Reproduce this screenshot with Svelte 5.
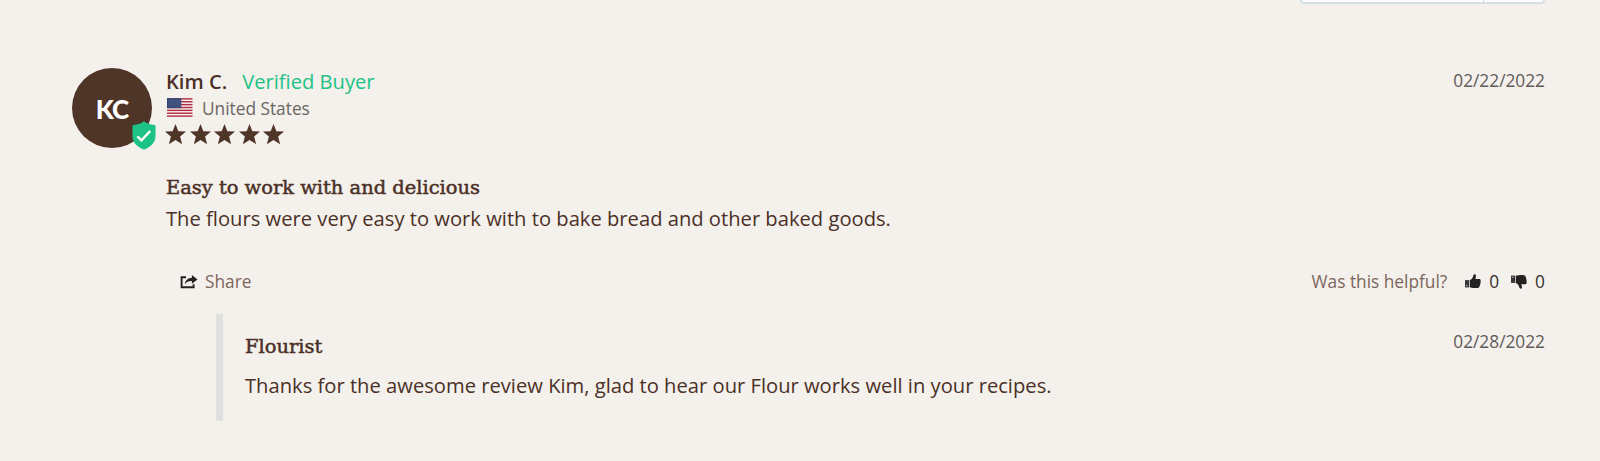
<script lang="ts">
  interface Vote {
    kind: 'up' | 'down';
    count: number;
  }

  const review = {
    initials: 'KC',
    author: 'Kim C.',
    country: 'United States',
    rating: 5,
    date: '02/22/2022',
    title: 'Easy to work with and delicious',
    body: 'The flours were very easy to work with to bake bread and other baked goods.',
  };

  const reply = {
    author: 'Flourist',
    date: '02/28/2022',
    body: 'Thanks for the awesome review Kim, glad to hear our Flour works well in your recipes.',
  };

  let votes: Vote[] = $state([
    { kind: 'up', count: 0 },
    { kind: 'down', count: 0 },
  ]);

  const stars = Array.from({ length: review.rating }, (_, i) => i);
  const stripes = [0, 2, 4, 6, 8, 10, 12];
</script>

<main class="reviews">
  <div class="toolbar">
    <div class="sort">
      <span class="sort-value"></span>
      <span class="sort-toggle"></span>
    </div>
  </div>

  <article class="review">
    <div class="avatar">
      <span class="initials">{review.initials}</span>
      <svg class="badge" viewBox="0 0 24 29" aria-hidden="true">
        <path d="M12 .3c3.500 2.600 7.200 3.700 11.500 4v11c0 6.300-4.600 10.600-11.500 13.500C5.100 25.900.5 21.600.5 15.300v-11C4.800 4 8.500 2.900 12 .3z" fill="#1cc286" />
        <path d="M5.300 15.300l4.200 4 8.700-9.300" fill="none" stroke="#fff" stroke-width="2.500" />
      </svg>
    </div>

    <div class="content">
      <header class="head">
        <div>
          <div class="byline">
            <span class="name">{review.author}</span>
            <span class="verified">Verified Buyer</span>
          </div>
          <div class="location">
            <svg class="flag" viewBox="0 0 26 19" aria-hidden="true">
              <rect width="26" height="19" fill="#fbf3f2" />
              {#each stripes as s}
                <rect y={s * 1.4615} width="26" height="1.4615" fill="#b02c42" />
              {/each}
              <rect width="14.500" height="10.230" fill="#334774" />
              <path d="M1.500 2h12M2.500 4h11M1.500 6h12M2.500 8h11" stroke="#8794b3" stroke-width=".8" stroke-dasharray="1 1.500" />
            </svg>
            <span>{review.country}</span>
          </div>
          <div class="stars" role="img" aria-label="{review.rating} out of 5 stars">
            {#each stars as star (star)}
              <svg viewBox="0 0 20 20" preserveAspectRatio="none" aria-hidden="true">
                <path d="M10 0l2.700 7 7.300.3-5.600 4.900 1.900 7.500L10 15.600l-6.300 4.100 1.900-7.500L0 7.300 7.300 7z" />
              </svg>
            {/each}
          </div>
        </div>
        <time class="date">{review.date}</time>
      </header>

      <h3 class="title">{review.title}</h3>
      <p class="text review-text">{review.body}</p>

      <div class="actions">
        <button type="button" class="share">
          <svg class="share-icon" viewBox="0 0 17 14" aria-hidden="true">
            <path d="M5.500 2.300H1.100v9.900h12V9.300" fill="none" stroke="#222" stroke-width="1.900" />
            <path d="M11.400 0L17 4.400l-5.600 4.300V6.100C8.200 6 6.200 6.700 4.300 9.200 4.700 5.300 7.300 3 11.400 2.700z" fill="#222" />
          </svg>
          <span>Share</span>
        </button>
        <div class="helpful">
          <span class="question">Was this helpful?</span>
          {#each votes as vote (vote.kind)}
            <button type="button" class="vote" aria-label="Vote {vote.kind}" onclick={() => vote.count++}>
              <svg class="thumb" class:down={vote.kind === 'down'} viewBox="0 0 17 16" aria-hidden="true">
                <path d="M0 6.500h4.200v7.800H0z" fill="#333" />
                <path d="M1.300 11.800h1.200V13H1.300z" fill="#ccc" />
                <path d="M5 6.500c2.300-.8 3.300-2.500 3.900-5C9.200 0 11.500-.1 11.600 2c.1 1.300-.4 2.300-.7 3.200h4.200c1.500 0 2 1.400 1.300 2.300.6.800.4 1.700-.2 2.200.4.900.1 1.700-.5 2.200.2 1.300-.5 2.800-2 2.900-2.500.3-5.300.3-8.700-.7z" fill="#222" />
              </svg>
              <span>{vote.count}</span>
            </button>
          {/each}
        </div>
      </div>

      <section class="reply">
        <div class="reply-head">
          <h4 class="title">{reply.author}</h4>
          <time class="date">{reply.date}</time>
        </div>
        <p class="text">{reply.body}</p>
      </section>
    </div>
  </article>
</main>

<style>
  :global(body) {
    margin: 0;
    background: #f4f0eb;
  }
  .reviews {
    height: 461px;
    overflow: hidden;
    padding: 0 55px 0 72px;
    box-sizing: border-box;
    font-family: 'Open Sans', sans-serif;
    color: #4b3027;
  }
  h3, h4, p {
    margin: 0;
  }
  button {
    border: 0;
    padding: 0;
    background: none;
    font: inherit;
    color: inherit;
    display: flex;
    align-items: center;
    cursor: pointer;
  }

  .toolbar {
    display: flex;
    justify-content: flex-end;
    height: 67px;
  }
  .sort {
    display: flex;
    width: 245px;
    height: 4px;
    box-sizing: border-box;
    background: #fff;
    border: 2px solid #d5dfe6;
    border-top: 0;
    border-radius: 0 0 4px 4px;
  }
  .sort-value {
    flex: 1;
  }
  .sort-toggle {
    width: 59px;
    border-left: 1px solid #c9d5df;
  }

  .review {
    display: flex;
    gap: 14px;
  }
  .avatar {
    position: relative;
    flex: none;
    width: 80px;
    height: 80px;
    margin-top: 1px;
    border-radius: 50%;
    background: #4f3428;
    color: #fff;
    display: grid;
    place-items: center;
  }
  .initials {
    font-family: Lato, sans-serif;
    font-size: 26px;
    font-weight: 900;
    letter-spacing: -0.800px;
    line-height: 34px;
    padding-top: 1px;
  }
  .badge {
    position: absolute;
    left: 59.500px;
    top: 53px;
    width: 24px;
    height: 29px;
  }

  .content {
    flex: 1;
  }
  .head {
    display: flex;
    justify-content: space-between;
  }
  .byline {
    display: flex;
    gap: 15px;
    font-size: 20.150px;
    line-height: 28px;
  }
  .name {
    font-weight: 600;
  }
  .verified {
    color: #1cc286;
  }
  .location {
    display: flex;
    align-items: center;
    gap: 9px;
    padding-left: 1px;
    font-size: 17.300px;
    line-height: 27px;
    color: #6b6663;
  }
  .flag {
    width: 25.500px;
    height: 19px;
    margin-top: -2px;
  }
  .location span {
    margin-left: 0.500px;
  }
  .stars {
    display: flex;
    gap: 3.500px;
    margin-top: 2px;
    margin-left: -1px;
  }
  .stars svg {
    width: 21px;
    height: 20.500px;
    fill: #4f3428;
  }
  .date {
    font-size: 17.300px;
    line-height: 28px;
    color: #5f5b58;
  }

  .title {
    font-family: 'DejaVu Serif', serif;
    font-size: 19.450px;
    font-weight: 400;
    line-height: 28px;
    -webkit-text-stroke: 0.500px currentColor;
  }
  .content > .title {
    margin-top: 29px;
  }
  .text {
    font-size: 20.180px;
    line-height: 32px;
  }
  .review-text {
    margin-top: 0;
  }

  .actions {
    display: flex;
    justify-content: space-between;
    align-items: center;
    height: 28px;
    margin-top: 34px;
    padding-left: 14px;
    font-size: 17.300px;
    color: #7b665d;
  }
  .share {
    gap: 7px;
  }
  .share-icon {
    width: 18px;
    height: 14px;
  }
  .helpful {
    display: flex;
    align-items: center;
  }
  .vote {
    gap: 8px;
    margin-left: 12px;
    color: #33302e;
  }
  .question + .vote {
    margin-left: 18px;
  }
  .thumb {
    width: 16px;
    height: 15px;
  }
  .thumb.down {
    transform: scaleY(-1);
  }

  .reply {
    margin: 18px 0 0 50px;
    padding: 14px 0 0 22px;
    height: 107px;
    box-sizing: border-box;
    border-left: 7px solid #e0e0e0;
  }
  .reply-head {
    display: flex;
    justify-content: space-between;
  }
  .reply .title {
    padding-top: 5px;
  }
  .reply .text {
    margin-top: 8px;
  }
</style>
